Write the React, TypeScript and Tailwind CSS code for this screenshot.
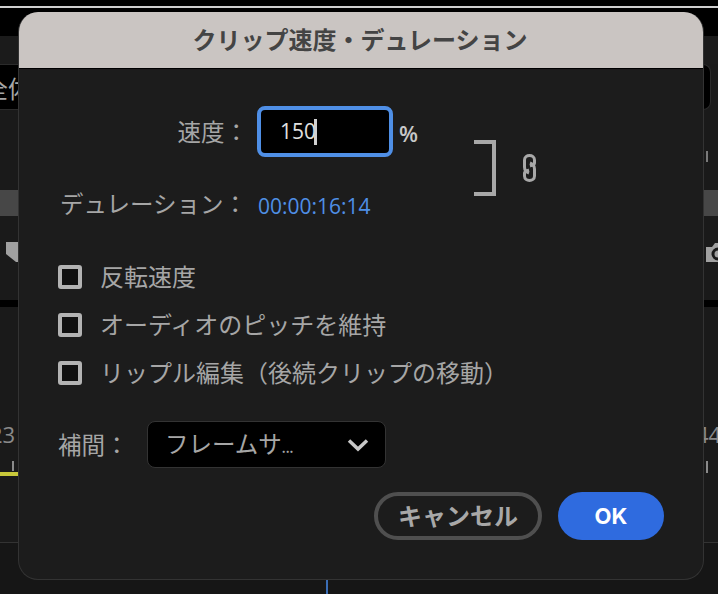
const jp = "font-['Noto_Sans_CJK_JP','Noto_Sans',sans-serif]";
const latin = "font-['Open_Sans',sans-serif]";

function Check({ label }: { label: string }) {
  return (
    <div className="flex items-center h-[48px]">
      <span className="w-[24px] h-[24px] rounded-[3px] border-[4px] border-[#b3b3b3] bg-[#111111]" />
      <span className="ml-[18px] mb-[2px] text-[24px] leading-[30px] text-[#a6a6a6] whitespace-nowrap">{label}</span>
    </div>
  );
}

function Background() {
  return (
    <div className="absolute inset-0 flex flex-col bg-[#1a1a1a]">
      <div className="h-[6px] bg-black" />
      <div className="h-[2px] bg-[#cfcfcf]" />
      <div className="h-[28px] bg-black" />
      <div className="h-[28px] bg-[#1b1b1b]" />
      <div className="h-[46px] w-[711px] bg-black border border-l-0 border-[#2b2b2b] rounded-r-[8px]" />
      <div className="h-[80px]" />
      <div className="h-[26px] bg-[#474747]" />
      <div className="h-[84px]" />
      <div className="h-[7px] bg-black" />
      <div className="h-[165px]" />
      <div className="h-[4px] w-[20px] bg-[#c8c83a]" />
      <div className="h-[67px] border-b border-[#333333]" />
      <div className="flex-1 bg-[#161616]" />
    </div>
  );
}

export default function App() {
  return (
    <div className={`relative w-[718px] h-[594px] overflow-hidden ${jp}`}>
      <Background />
      <span className="absolute left-[-16px] top-[73px] text-[24px] leading-[30px] text-[#a6a6a6] whitespace-nowrap">全体</span>
      <span className={`absolute left-[-10px] top-[419px] text-[22px] leading-[30px] text-[#8a8a8a] ${latin}`}>23</span>
      <span className={`absolute left-[696px] top-[419px] text-[22px] leading-[30px] text-[#8a8a8a] ${latin}`}>44</span>
      <svg className="absolute left-[6px] top-[242px]" width="12" height="20" viewBox="0 0 12 20">
        <path d="M0 0 H12 V20 L10 20 L0 12 Z" fill="#a0a0a0" />
      </svg>
      <svg className="absolute left-[706px] top-[243px]" width="12" height="19" viewBox="0 0 12 19">
        <path d="M0 4 H6 L9 0 H12 V19 H0 Z" fill="#a0a0a0" />
        <circle cx="12" cy="11" r="5" fill="none" stroke="#1a1a1a" strokeWidth="3" />
      </svg>
      <span className="absolute left-[12px] top-[461px] w-[2px] h-[10px] bg-[#8a8a8a]" />
      <span className="absolute left-[706px] top-[151px] w-[2px] h-[11px] bg-[#7a7a7a]" />
      <span className="absolute left-[706px] top-[461px] w-[2px] h-[12px] bg-[#8a8a8a]" />
      <span className="absolute left-[326px] top-[580px] w-[2px] h-[14px] bg-[#3a6db5]" />

      <div className="absolute left-[18px] top-[12px] w-[686px] h-[568px] rounded-[20px] overflow-hidden border border-[#333333] border-t-0 bg-[#1c1c1c]">
        <div className="h-[57px] pb-[3px] pr-[2px] bg-[#cac5c2] border-b border-black flex items-center justify-center text-[24px] font-bold text-[#444444]">
          クリップ速度・デュレーション
        </div>
        <div className="h-[510px] px-[39px] flex flex-col">
          <div className="h-[184px] flex">
            <div className="grid grid-cols-[192px_224px] grid-rows-[51px_30px] gap-y-[33px] mt-[37px] h-[114px]">
              <div className="flex items-center justify-end pr-[2px] text-[23.5px] text-[#a6a6a6] whitespace-nowrap">速度：</div>
              <div className="flex items-center">
                <div className={`ml-[7px] w-[136px] h-[51px] rounded-[8px] border-[4px] border-[#4f8fe6] bg-black flex items-center pl-[19px] text-[21px] text-[#e0e0e0] ${latin}`}>
                  150<span className="w-[3px] h-[26px] bg-[#d0d0d0] ml-[-2px]" />
                </div>
                <span className={`ml-[6px] mt-[3px] text-[22px] font-semibold text-[#c8c8c8] ${latin}`}>%</span>
              </div>
              <div className="flex items-center justify-end pr-[3px] pb-[2px] text-[23.5px] text-[#a6a6a6] whitespace-nowrap">デュレーション：</div>
              <div className={`flex items-center pl-[8px] pt-[3px] text-[21px] text-[#4f8fe6] whitespace-nowrap ${latin}`}>00:00:16:14</div>
            </div>
            <div className="mt-[71px] w-[22px] h-[56px] border-[4px] border-l-0 border-[#a8a8a8]" />
            <svg className="ml-[27px] mt-[85px]" width="13" height="28" viewBox="0 0 13 28" fill="none" stroke="#a8a8a8" strokeWidth="3">
              <path d="M6 19 C3 18 1.5 16 1.5 13 V6 C1.5 3 4 1.5 6.5 1.5 C9 1.5 11.5 3 11.5 6 V9 C11.5 11 9 11.5 7 12" />
              <path d="M7 9 C10 10 11.5 12 11.5 15 V22 C11.5 25 9 26.5 6.5 26.5 C4 26.5 1.5 25 1.5 22 V19 C1.5 17 4 16.5 6 16" />
            </svg>
          </div>
          <Check label="反転速度" />
          <Check label="オーディオのピッチを維持" />
          <Check label="リップル編集（後続クリップの移動）" />
          <div className="flex items-center mt-[24px]">
            <span className="text-[23.5px] text-[#a6a6a6] w-[89px] whitespace-nowrap">補間：</span>
            <div className="w-[239px] h-[47px] rounded-[8px] border border-[#333333] bg-black flex items-center pl-[17px] pr-[16px] text-[#a6a6a6] text-[23.5px]">
              <span className="flex-1 whitespace-nowrap mb-[2px]">フレームサ<span className="text-[12px] font-bold">...</span></span>
              <svg width="22" height="14" viewBox="0 0 22 14" fill="none" stroke="#c8c8c8" strokeWidth="3.5"><path d="M2 2.5 L11 11 L20 2.5" /></svg>
            </div>
          </div>
          <div className="flex justify-end gap-[16px] mt-[24px]">
            <button className="w-[168px] h-[48px] pb-[2px] rounded-full border-[4px] border-[#4f4f4f] text-[24px] font-bold text-[#a8a8a8]">キャンセル</button>
            <button className="w-[106px] h-[48px] rounded-full bg-[#2f6bdf] text-[22px] font-bold text-white font-['Inter',sans-serif]">OK</button>
          </div>
        </div>
      </div>
    </div>
  );
}
